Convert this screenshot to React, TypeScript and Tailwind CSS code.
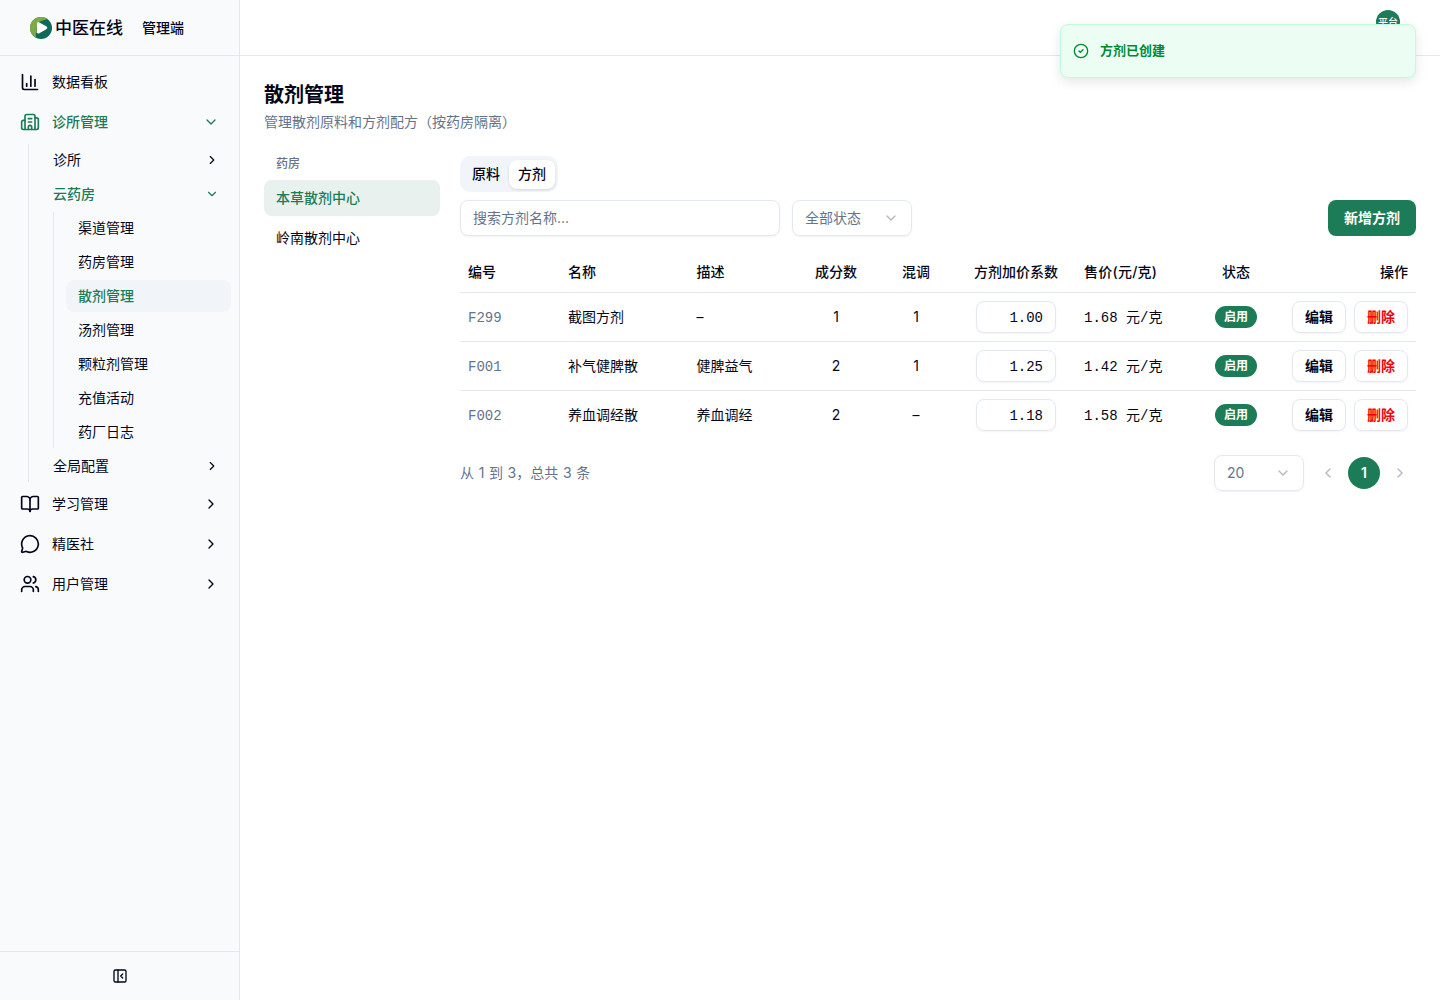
import React from 'react';
import {
  BookOpen,
  Building2,
  ChartColumn,
  ChevronDown,
  ChevronLeft,
  ChevronRight,
  CircleCheck,
  MessageCircle,
  PanelLeftClose,
  Users,
  type LucideIcon,
} from 'lucide-react';

function Logo() {
  return (
    <svg viewBox="0 0 22 22" className="size-[22px]">
      <defs>
        <linearGradient id="leaf" x1="0" y1="0" x2="0.6" y2="1">
          <stop offset="0" stopColor="#7fae4a" />
          <stop offset="1" stopColor="#7aa34c" />
        </linearGradient>
      </defs>
      <circle cx="11" cy="11" r="11" fill="#0f6b57" />
      <path d="M17.5 2.1A11 11 0 1 0 6.500 21C5.500 19 5.600 16.500 6.400 15L7.500 6Q11 3.500 17.500 2.100Z" fill="url(#leaf)" />
      <path d="M7 6.800Q7 4.300 9.300 5.400L16.300 9.200Q18.300 10.700 16.300 12.200L9.300 16.200Q7.300 17.200 6.600 15.500Q7 14 7 12Z" fill="#fff" />
    </svg>
  );
}

function NavItem({ icon: Icon, label, state }: { icon: LucideIcon; label: string; state?: 'open' | 'closed' }) {
  return (
    <div className={`flex h-9 items-center gap-3 rounded-lg px-3 ${state === 'open' ? 'font-medium text-[#1c7c58]' : ''}`}>
      <Icon className="size-5" strokeWidth={2} />
      <span className="flex-1">{label}</span>
      {state === 'open' && <ChevronDown className="size-4" />}
      {state === 'closed' && <ChevronRight className="size-4" />}
    </div>
  );
}

function SubItem({ label, open }: { label: string; open?: boolean }) {
  return (
    <div className={`flex h-8 items-center justify-between px-3 ${open ? 'font-medium text-[#1c7c58]' : ''}`}>
      <span>{label}</span>
      {open ? <ChevronDown className="size-3.5" /> : <ChevronRight className="size-3.5" />}
    </div>
  );
}

const pharmacyLinks = ['渠道管理', '药房管理', '散剂管理', '汤剂管理', '颗粒剂管理', '充值活动', '药厂日志'];

function Sidebar() {
  return (
    <aside className="flex w-60 shrink-0 flex-col border-r border-[#e2e8f0] bg-[#f9fafc]">
      <div className="flex h-14 shrink-0 items-center border-b border-[#e2e8f0] pl-[30px]">
        <Logo />
        <span className="ml-[3px] pt-px text-[17px] font-medium">中医在线</span>
        <span className="ml-[19px] font-medium">管理端</span>
      </div>
      <nav className="flex flex-1 flex-col gap-1 p-2">
        <NavItem icon={ChartColumn} label="数据看板" />
        <NavItem icon={Building2} label="诊所管理" state="open" />
        <div className="ml-5 flex flex-col gap-0.5 border-l border-[#e2e8f0] pl-3">
          <SubItem label="诊所" />
          <SubItem label="云药房" open />
          <div className="ml-3 flex flex-col gap-0.5 border-l border-[#e2e8f0] pl-3">
            {pharmacyLinks.map((label) => (
              <div
                key={label}
                className={`flex h-8 items-center rounded-lg px-3 ${label === '散剂管理' ? 'bg-[#f1f4f9] font-medium text-[#1c7c58]' : ''}`}
              >
                {label}
              </div>
            ))}
          </div>
          <SubItem label="全局配置" />
        </div>
        <NavItem icon={BookOpen} label="学习管理" state="closed" />
        <NavItem icon={MessageCircle} label="精医社" state="closed" />
        <NavItem icon={Users} label="用户管理" state="closed" />
      </nav>
      <div className="flex h-[49px] items-center justify-center border-t border-[#e2e8f0]">
        <PanelLeftClose className="size-4" />
      </div>
    </aside>
  );
}

const rows = [
  { id: 'F299', name: '截图方剂', desc: '–', count: '1', mix: '1', factor: '1.00', price: '1.68' },
  { id: 'F001', name: '补气健脾散', desc: '健脾益气', count: '2', mix: '1', factor: '1.25', price: '1.42' },
  { id: 'F002', name: '养血调经散', desc: '养血调经', count: '2', mix: '–', factor: '1.18', price: '1.58' },
];

const mono = "font-['Liberation_Mono','Noto_Sans_CJK_SC',monospace]";

function FormulaTable() {
  return (
    <table className="mt-4 w-full table-fixed border-collapse">
      <colgroup>
        <col className="w-[100px]" />
        <col className="w-[128.500px]" />
        <col />
        <col className="w-20" />
        <col className="w-20" />
        <col className="w-[120px]" />
        <col className="w-[120px]" />
        <col className="w-20" />
        <col className="w-[140px]" />
      </colgroup>
      <thead>
        <tr className="h-10 border-b border-[#e2e8f0] text-left whitespace-nowrap">
          <th className="px-2 font-medium">编号</th>
          <th className="px-2 font-medium">名称</th>
          <th className="px-2 font-medium">描述</th>
          <th className="px-2 text-center font-medium">成分数</th>
          <th className="px-2 text-center font-medium">混调</th>
          <th className="px-2 text-center font-medium">方剂加价系数</th>
          <th className="px-2 font-medium tracking-[0.25px]">售价(元/克)</th>
          <th className="px-2 text-center font-medium">状态</th>
          <th className="px-2 text-right font-medium">操作</th>
        </tr>
      </thead>
      <tbody>
        {rows.map((r) => (
          <tr key={r.id} className="h-[49px] border-b border-[#e2e8f0] last:border-0">
            <td className={`px-2 pt-0.5 text-[#64748b] ${mono}`}>{r.id}</td>
            <td className="px-2">{r.name}</td>
            <td className="px-2">{r.desc}</td>
            <td className="px-2 text-center">{r.count}</td>
            <td className="px-2 text-center">{r.mix}</td>
            <td>
              <div className={`mx-auto flex h-8 w-20 items-center justify-end rounded-lg border border-[#e2e8f0] px-3 pt-0.5 shadow-xs ${mono}`}>{r.factor}</div>
            </td>
            <td className={`px-2 pt-0.5 whitespace-nowrap ${mono}`}>{r.price} 元/克</td>
            <td>
              <div className="mx-auto flex h-[22px] w-[42px] items-center justify-center rounded-full bg-[#1c7c58] text-xs font-semibold text-white">启用</div>
            </td>
            <td className="px-2">
              <div className="flex justify-end gap-2 font-semibold">
                <div className="flex h-8 w-[54px] items-center justify-center rounded-lg border border-[#e2e8f0] shadow-xs">编辑</div>
                <div className="flex h-8 w-[54px] items-center justify-center rounded-lg border border-[#e2e8f0] text-[#f3000b] shadow-xs">删除</div>
              </div>
            </td>
          </tr>
        ))}
      </tbody>
    </table>
  );
}

export default function App() {
  return (
    <div className="flex h-[1000px] bg-white font-['Inter','Noto_Sans_CJK_SC',sans-serif] text-sm text-[#020618]" lang="zh-CN">
      <Sidebar />
      <div className="flex min-w-0 flex-1 flex-col">
        <header className="flex h-14 shrink-0 justify-end border-b border-[#e2e8f0] pt-2.5 pr-10">
          <div className="flex size-6 items-center justify-center rounded-full bg-[#1c7c58] text-[10px] font-medium text-white">平台</div>
        </header>
        <main className="p-6">
          <h1 className="pt-px text-xl leading-7 font-semibold">散剂管理</h1>
          <p className="pb-0.5 leading-[25px] text-[#64748b]">管理散剂原料和方剂配方（按药房隔离）</p>
          <div className="mt-5 flex gap-5">
            <div className="w-44 shrink-0">
              <div className="flex h-4 items-center px-3 text-xs font-medium text-[#64748b]">药房</div>
              <div className="mt-2 flex h-9 items-center rounded-lg bg-[#e8f1ed] px-3 font-medium text-[#1c7c58]">本草散剂中心</div>
              <div className="mt-1 flex h-9 items-center px-3">岭南散剂中心</div>
            </div>
            <div className="min-w-0 flex-1">
              <div className="flex h-9 w-fit items-center rounded-[10px] bg-[#f1f5f9] p-[3px] font-medium">
                <div className="flex h-[29px] items-center px-[9px]">原料</div>
                <div className="flex h-[29px] items-center rounded-lg bg-white px-[9px] shadow-sm">方剂</div>
              </div>
              <div className="mt-2 flex gap-3">
                <div className="flex h-9 w-80 items-center rounded-lg border border-[#e2e8f0] px-3 text-[#64748b] shadow-xs">搜索方剂名称...</div>
                <div className="flex h-9 w-[120px] items-center justify-between rounded-lg border border-[#e2e8f0] px-3 text-[#64748b] shadow-xs">
                  全部状态
                  <ChevronDown className="size-4 opacity-50" />
                </div>
                <div className="ml-auto flex h-9 w-[88px] items-center justify-center rounded-lg bg-[#1c7c58] font-semibold text-white">新增方剂</div>
              </div>
              <FormulaTable />
              <div className="mt-4 flex items-center text-[#64748b]">
                <span className="flex-1 [word-spacing:0.7px]">从 1 到 3，总共 3 条</span>
                <div className="flex h-9 w-[90px] items-center justify-between rounded-lg border border-[#e2e8f0] px-3 shadow-xs">
                  20
                  <ChevronDown className="size-4 opacity-50" />
                </div>
                <ChevronLeft className="ml-4 size-4 opacity-50" />
                <div className="mx-3 flex size-8 items-center justify-center rounded-full bg-[#1c7c58] font-semibold text-white">1</div>
                <ChevronRight className="mr-2 size-4 opacity-50" />
              </div>
            </div>
          </div>
        </main>
      </div>
      <div className="absolute top-6 right-6 flex h-[54px] w-[356px] items-center rounded-lg border border-[#bffcd9] bg-[#ecfdf3] pl-3 text-[13px] font-semibold text-[#008a2e] shadow-[0_4px_12px_rgba(0,0,0,0.1)]">
        <CircleCheck className="size-4" />
        <span className="ml-[11px] pb-px">方剂已创建</span>
      </div>
    </div>
  );
}
